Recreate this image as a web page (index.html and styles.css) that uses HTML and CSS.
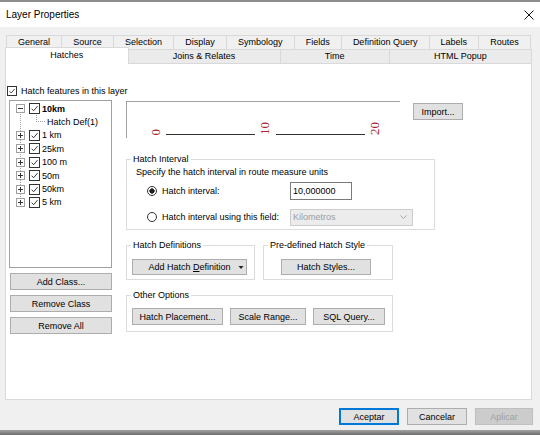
FILE: index.html
```html
<!DOCTYPE html>
<html>
<head>
  <meta charset="utf-8">
  <title>Layer Properties</title>
  <link rel="stylesheet" href="styles.css">
</head>
<body>
<div class="titlebar">
  <span class="title">Layer Properties</span>
  <svg class="close" width="10" height="10" viewBox="0 0 10 10"><path d="M0.5 0.5L9.5 9.5M9.5 0.5L0.5 9.5" stroke="#111" stroke-width="1" fill="none"/></svg>
</div>

<div class="tabs">
  <div class="tabrow first">
    <div class="tab">General</div>
    <div class="tab">Source</div>
    <div class="tab">Selection</div>
    <div class="tab">Display</div>
    <div class="tab">Symbology</div>
    <div class="tab">Fields</div>
    <div class="tab">Definition Query</div>
    <div class="tab">Labels</div>
    <div class="tab">Routes</div>
  </div>
  <div class="tabrow second">
    <div class="tab active">Hatches</div>
    <div class="tab">Joins &amp; Relates</div>
    <div class="tab">Time</div>
    <div class="tab">HTML Popup</div>
  </div>
</div>

<div class="panel">
  <div class="enable">
    <span class="check"><svg viewBox="0 0 10 10"><path d="M1.8 5.2l2.2 2.3L8.4 2.4" stroke="#222" fill="none"/></svg></span>
    <span>Hatch features in this layer</span>
  </div>

  <div class="main">
    <div class="left">
      <div class="tree">
        <div class="row">
          <svg class="exp" viewBox="0 0 9 9"><rect x="0.5" y="0.5" width="8" height="8" fill="#fff" stroke="#a0a0a0"/><path d="M2 4.5h5" stroke="#333"/></svg>
          <span class="check"><svg viewBox="0 0 10 10"><path d="M1.8 5.2l2.2 2.3L8.4 2.4" stroke="#222" fill="none"/></svg></span>
          <b>10km</b>
        </div>
        <div class="row child"><span class="elbow"></span>Hatch Def(1)</div>
        <div class="row">
          <svg class="exp" viewBox="0 0 9 9"><rect x="0.5" y="0.5" width="8" height="8" fill="#fff" stroke="#a0a0a0"/><path d="M2 4.5h5M4.5 2v5" stroke="#333"/></svg>
          <span class="check"><svg viewBox="0 0 10 10"><path d="M1.8 5.2l2.2 2.3L8.4 2.4" stroke="#222" fill="none"/></svg></span>
          <span>1 km</span>
        </div>
        <div class="row">
          <svg class="exp" viewBox="0 0 9 9"><rect x="0.5" y="0.5" width="8" height="8" fill="#fff" stroke="#a0a0a0"/><path d="M2 4.5h5M4.5 2v5" stroke="#333"/></svg>
          <span class="check"><svg viewBox="0 0 10 10"><path d="M1.8 5.2l2.2 2.3L8.4 2.4" stroke="#222" fill="none"/></svg></span>
          <span>25km</span>
        </div>
        <div class="row">
          <svg class="exp" viewBox="0 0 9 9"><rect x="0.5" y="0.5" width="8" height="8" fill="#fff" stroke="#a0a0a0"/><path d="M2 4.5h5M4.5 2v5" stroke="#333"/></svg>
          <span class="check"><svg viewBox="0 0 10 10"><path d="M1.8 5.2l2.2 2.3L8.4 2.4" stroke="#222" fill="none"/></svg></span>
          <span>100 m</span>
        </div>
        <div class="row">
          <svg class="exp" viewBox="0 0 9 9"><rect x="0.5" y="0.5" width="8" height="8" fill="#fff" stroke="#a0a0a0"/><path d="M2 4.5h5M4.5 2v5" stroke="#333"/></svg>
          <span class="check"><svg viewBox="0 0 10 10"><path d="M1.8 5.2l2.2 2.3L8.4 2.4" stroke="#222" fill="none"/></svg></span>
          <span>50m</span>
        </div>
        <div class="row">
          <svg class="exp" viewBox="0 0 9 9"><rect x="0.5" y="0.5" width="8" height="8" fill="#fff" stroke="#a0a0a0"/><path d="M2 4.5h5M4.5 2v5" stroke="#333"/></svg>
          <span class="check"><svg viewBox="0 0 10 10"><path d="M1.8 5.2l2.2 2.3L8.4 2.4" stroke="#222" fill="none"/></svg></span>
          <span>50km</span>
        </div>
        <div class="row">
          <svg class="exp" viewBox="0 0 9 9"><rect x="0.5" y="0.5" width="8" height="8" fill="#fff" stroke="#a0a0a0"/><path d="M2 4.5h5M4.5 2v5" stroke="#333"/></svg>
          <span class="check"><svg viewBox="0 0 10 10"><path d="M1.8 5.2l2.2 2.3L8.4 2.4" stroke="#222" fill="none"/></svg></span>
          <span>5 km</span>
        </div>
      </div>
      <button class="btn">Add Class...</button>
      <button class="btn">Remove Class</button>
      <button class="btn">Remove All</button>
    </div>

    <div class="right">
      <div class="preview-row">
        <div class="preview">
          <span class="num">0</span>
          <span class="rule"></span>
          <span class="num">10</span>
          <span class="rule"></span>
          <span class="num">20</span>
        </div>
        <button class="btn import">Import...</button>
      </div>

      <fieldset class="group interval">
        <legend>Hatch Interval</legend>
        <div class="hint">Specify the hatch interval in route measure units</div>
        <div class="opt">
          <label class="radio-label"><span class="radio on"></span>Hatch interval:</label>
          <input class="field" type="text" value="10,000000">
        </div>
        <div class="opt">
          <label class="radio-label"><span class="radio"></span>Hatch interval using this field:</label>
          <div class="combo">
            <span>Kilometros</span>
            <svg width="7" height="4" viewBox="0 0 7 4"><path d="M0.5 0.5L3.5 3.5L6.5 0.5" stroke="#a6a6a6" fill="none"/></svg>
          </div>
        </div>
      </fieldset>

      <div class="groups">
        <fieldset class="group defs">
          <legend>Hatch Definitions</legend>
          <button class="btn split"><span>Add Hatch <u>D</u>efinition</span><svg width="10" height="3" viewBox="0 0 10 3"><path d="M2.5 0h5L5 3z" fill="#222"/></svg></button>
        </fieldset>
        <fieldset class="group style">
          <legend>Pre-defined Hatch Style</legend>
          <button class="btn">Hatch Styles...</button>
        </fieldset>
      </div>

      <fieldset class="group other">
        <legend>Other Options</legend>
        <div class="other-row">
          <button class="btn placement">Hatch Placement...</button>
          <button class="btn scale">Scale Range...</button>
          <button class="btn sql">SQL Query...</button>
        </div>
      </fieldset>
    </div>
  </div>
</div>

<div class="footer">
  <button class="btn ok">Aceptar</button>
  <button class="btn cancel">Cancelar</button>
  <button class="btn apply">Aplicar</button>
</div>
<div class="edge"></div>
</body>
</html>
```

FILE: styles.css
```css
* {
  box-sizing: border-box;
}
body {
  margin: 0;
  width: 540px;
  height: 435px;
  overflow: hidden;
  background: #f0f0f0;
  font-family: "Liberation Sans", Arial, sans-serif;
  font-size: 9px;
  color: #000;
}

.titlebar {
  height: 27px;
  border-top: 2px solid #8c8c8c;
  background: #fff;
  display: flex;
  align-items: center;
  justify-content: space-between;
  padding: 0 6px;
}
.title {
  font-size: 10px;
}

.tabs {
  margin-top: 8px;
}
.tabrow {
  display: flex;
  height: 14px;
}
.tabrow.first {
  margin-left: 6px;
  width: 525px;
}
.tabrow.second {
  margin-left: 5px;
  width: 527px;
}
.tab {
  flex: 1 1 auto;
  text-align: center;
  line-height: 13px;
  border: 1px solid #d9d9d9;
  border-bottom: 0;
  border-right: 0;
  background: #f0f0f0;
}
.tab:last-child {
  border-right: 1px solid #d9d9d9;
}
.second .tab {
  background: #ebebeb;
}
.second .tab.active {
  background: #fff;
  margin-top: -2px;
  height: 17px;
  padding-top: 1px;
  border-right: 1px solid #d9d9d9;
  position: relative;
  z-index: 1;
}
.active + .tab {
  border-left: 0;
}

.panel {
  margin-left: 5px;
  width: 527px;
  height: 337px;
  background: #fff;
  border: 1px solid #d9d9d9;
  padding-top: 20px;
}
.enable {
  display: flex;
  align-items: center;
  gap: 4px;
  height: 14px;
  margin-left: 1px;
}
.check {
  width: 10px;
  height: 10px;
  border: 1px solid #333;
  background: #fff;
  display: inline-flex;
  flex: none;
}
.check svg {
  width: 100%;
  height: 100%;
}

.main {
  display: flex;
  margin-top: 2px;
  padding-left: 3px;
}
.left {
  width: 103px;
}
.tree {
  height: 168px;
  border: 1px solid #a0a0a0;
  padding-top: 1px;
  position: relative;
}
.tree::before {
  content: "";
  position: absolute;
  left: 10px;
  top: 8px;
  bottom: 64px;
  border-left: 1px dotted #a0a0a0;
}
.row {
  display: flex;
  align-items: center;
  height: 13.4px;
  padding-left: 6px;
  position: relative;
}
.exp {
  width: 9px;
  height: 9px;
  margin-right: 4px;
  flex: none;
}
.row .check {
  width: 11px;
  height: 11px;
  margin-right: 2px;
}
.row.child {
  padding-left: 26px;
}
.elbow {
  align-self: flex-start;
  width: 9px;
  height: 7px;
  margin-right: 2px;
  border-left: 1px dotted #a0a0a0;
  border-bottom: 1px dotted #a0a0a0;
}

.btn {
  display: flex;
  align-items: center;
  justify-content: center;
  height: 17px;
  padding: 0;
  border: 1px solid #adadad;
  background: #e1e1e1;
  font: inherit;
  color: #000;
}
.left .btn {
  width: 102px;
  margin: 5px 0 0 1px;
}

.right {
  margin-left: 14px;
}
.preview-row {
  display: flex;
  align-items: flex-start;
}
.preview {
  margin-top: 1px;
  width: 274px;
  height: 37px;
  border-top: 1px solid #a0a0a0;
  border-left: 1px solid #a0a0a0;
  display: flex;
  align-items: flex-end;
  padding: 0 0 3px 24px;
}
.num {
  writing-mode: vertical-rl;
  transform: rotate(180deg);
  font-family: "Liberation Serif", "Times New Roman", serif;
  font-size: 13px;
  line-height: 10px;
  color: #a8232a;
}
.rule {
  width: 89px;
  height: 1px;
  margin: 0 5px 0 6px;
  background: #333;
}
.preview .num:first-child + .rule {
  margin-left: 5px;
}
.import {
  width: 50px;
  margin: 3px 0 0 13px;
}

.group {
  margin: 0;
  padding: 0;
  border: 1px solid #dcdcdc;
  min-width: 0;
}
.group legend {
  margin-left: 4px;
  padding: 0 2px;
  line-height: 12px;
}
.interval {
  margin-top: 15px;
  width: 309px;
  height: 77px;
}
.hint {
  margin: 1px 0 0 9px;
  line-height: 12px;
}
.opt {
  display: flex;
  align-items: center;
  height: 18px;
  margin-top: 4px;
}
.opt + .opt {
  margin-top: 8px;
}
.radio-label {
  display: flex;
  align-items: center;
  gap: 5px;
  width: 143px;
  margin-left: 20px;
}
.radio {
  width: 10px;
  height: 10px;
  border: 1px solid #333;
  border-radius: 50%;
  background: #fff;
  flex: none;
}
.radio.on {
  background: radial-gradient(circle, #222 0 2.4px, #fff 2.9px);
}
.field {
  width: 62px;
  height: 18px;
  border: 1px solid #7a7a7a;
  padding: 0 2px;
  font: inherit;
  color: #000;
}
.combo {
  width: 123px;
  height: 17px;
  border: 1px solid #cccccc;
  background: #ececec;
  color: #9c9c9c;
  display: flex;
  align-items: center;
  justify-content: space-between;
  padding: 0 5px 0 2px;
}

.groups {
  display: flex;
  gap: 8px;
  margin-top: 9px;
}
.defs {
  width: 129px;
  height: 41px;
}
.style {
  width: 130px;
  height: 41px;
}
.defs .btn {
  width: 115px;
  height: 16px;
  margin: 8px 0 0 5px;
  padding-left: 10px;
}
.split span {
  flex: 1;
  text-align: center;
}
.style .btn {
  width: 90px;
  height: 16px;
  margin: 8px 0 0 17px;
}
.other {
  margin-top: 9px;
  width: 267px;
  height: 43px;
}
.other-row {
  display: flex;
  gap: 7px;
  margin: 7px 0 0 5px;
}
.placement {
  width: 91px;
}
.scale {
  width: 76px;
}
.sql {
  width: 72px;
}

.footer {
  height: 30px;
  display: flex;
  justify-content: flex-end;
  gap: 8px;
  padding: 8px 7px 0 0;
}
.footer .btn {
  width: 60px;
}
.footer .ok {
  border-color: #0078d7;
  box-shadow: inset 0 0 0 1px #0078d7;
}
.footer .apply {
  width: 58px;
  background: #cccccc;
  border-color: #bfbfbf;
  color: #a0a0a0;
}
.edge {
  height: 5px;
  background: linear-gradient(#a3a3a3, #6d6d6d);
}
```
